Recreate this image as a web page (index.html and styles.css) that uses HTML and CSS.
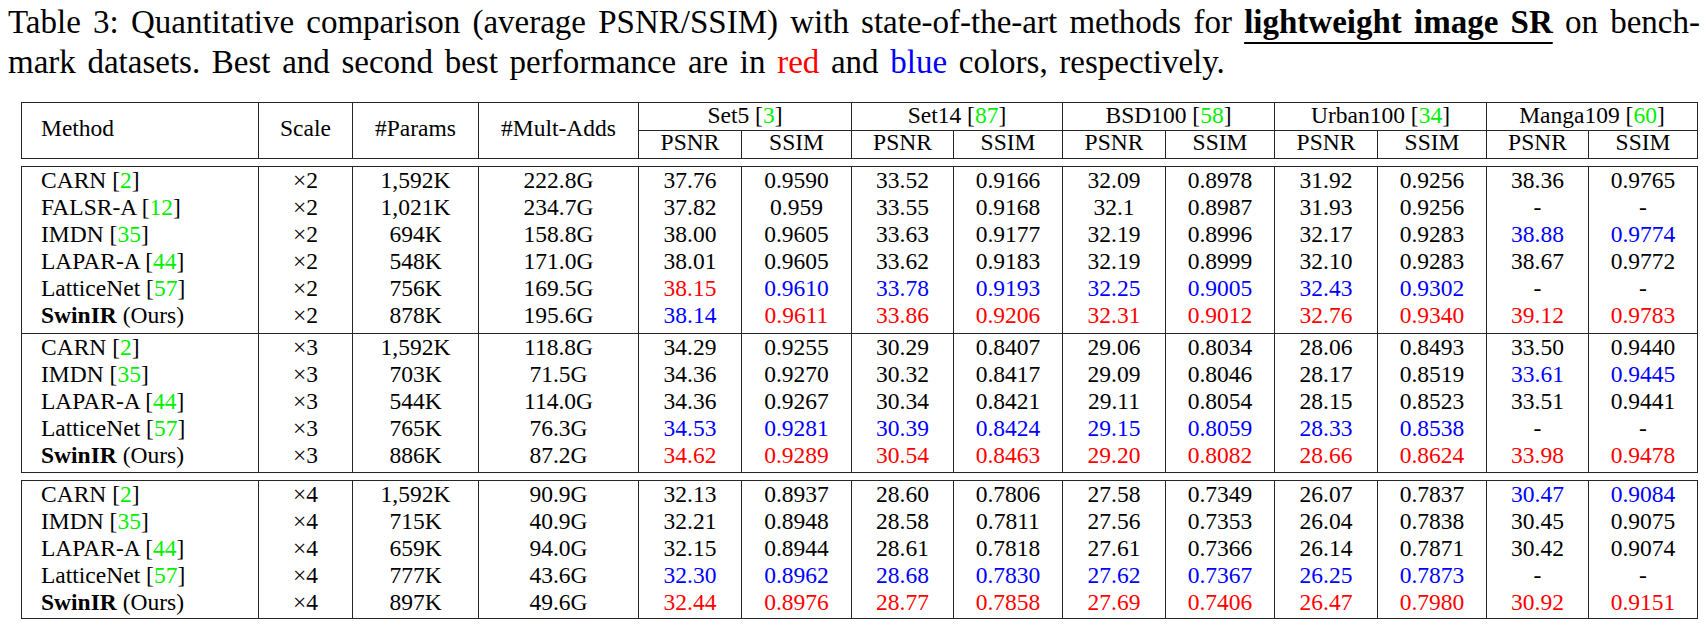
FILE: index.html
```html
<!DOCTYPE html>
<html lang="en">
<head>
<meta charset="utf-8">
<title>Table 3</title>
<link rel="stylesheet" href="styles.css">
</head>
<body>
<div class="page">
  <div class="caption">
    <div class="line1">Table 3: Quantitative comparison (average PSNR/SSIM) with state-of-the-art methods for <span class="ul">lightweight image SR</span> on bench-</div>
    <div class="line2">mark datasets. Best and second best performance are in <span class="r">red</span> and <span class="b">blue</span> colors, respectively.</div>
  </div>

  <div class="grid head">
    <div class="c m span">Method</div>
    <div class="c span">Scale</div>
    <div class="c span">#Params</div>
    <div class="c span">#Mult-Adds</div>
    <div class="c ds">Set5 [<span class="g">3</span>]</div>
    <div class="c ds">Set14 [<span class="g">87</span>]</div>
    <div class="c ds">BSD100 [<span class="g">58</span>]</div>
    <div class="c ds">Urban100 [<span class="g">34</span>]</div>
    <div class="c ds">Manga109 [<span class="g">60</span>]</div>
    <div class="c sub">PSNR</div><div class="c sub">SSIM</div>
    <div class="c sub">PSNR</div><div class="c sub">SSIM</div>
    <div class="c sub">PSNR</div><div class="c sub">SSIM</div>
    <div class="c sub">PSNR</div><div class="c sub">SSIM</div>
    <div class="c sub">PSNR</div><div class="c sub">SSIM</div>
  </div>

  <div class="grid sec s2">
    <div class="c m">CARN [<span class="g">2</span>]</div><div class="c">×2</div><div class="c">1,592K</div><div class="c">222.8G</div>
    <div class="c">37.76</div><div class="c">0.9590</div><div class="c">33.52</div><div class="c">0.9166</div><div class="c">32.09</div><div class="c">0.8978</div><div class="c">31.92</div><div class="c">0.9256</div><div class="c">38.36</div><div class="c">0.9765</div>

    <div class="c m">FALSR-A [<span class="g">12</span>]</div><div class="c">×2</div><div class="c">1,021K</div><div class="c">234.7G</div>
    <div class="c">37.82</div><div class="c">0.959</div><div class="c">33.55</div><div class="c">0.9168</div><div class="c">32.1</div><div class="c">0.8987</div><div class="c">31.93</div><div class="c">0.9256</div><div class="c">-</div><div class="c">-</div>

    <div class="c m">IMDN [<span class="g">35</span>]</div><div class="c">×2</div><div class="c">694K</div><div class="c">158.8G</div>
    <div class="c">38.00</div><div class="c">0.9605</div><div class="c">33.63</div><div class="c">0.9177</div><div class="c">32.19</div><div class="c">0.8996</div><div class="c">32.17</div><div class="c">0.9283</div><div class="c b">38.88</div><div class="c b">0.9774</div>

    <div class="c m">LAPAR-A [<span class="g">44</span>]</div><div class="c">×2</div><div class="c">548K</div><div class="c">171.0G</div>
    <div class="c">38.01</div><div class="c">0.9605</div><div class="c">33.62</div><div class="c">0.9183</div><div class="c">32.19</div><div class="c">0.8999</div><div class="c">32.10</div><div class="c">0.9283</div><div class="c">38.67</div><div class="c">0.9772</div>

    <div class="c m">LatticeNet [<span class="g">57</span>]</div><div class="c">×2</div><div class="c">756K</div><div class="c">169.5G</div>
    <div class="c r">38.15</div><div class="c b">0.9610</div><div class="c b">33.78</div><div class="c b">0.9193</div><div class="c b">32.25</div><div class="c b">0.9005</div><div class="c b">32.43</div><div class="c b">0.9302</div><div class="c">-</div><div class="c">-</div>

    <div class="c m"><strong>SwinIR</strong> (Ours)</div><div class="c">×2</div><div class="c">878K</div><div class="c">195.6G</div>
    <div class="c b">38.14</div><div class="c r">0.9611</div><div class="c r">33.86</div><div class="c r">0.9206</div><div class="c r">32.31</div><div class="c r">0.9012</div><div class="c r">32.76</div><div class="c r">0.9340</div><div class="c r">39.12</div><div class="c r">0.9783</div>
  </div>

  <div class="grid sec s3">
    <div class="c m">CARN [<span class="g">2</span>]</div><div class="c">×3</div><div class="c">1,592K</div><div class="c">118.8G</div>
    <div class="c">34.29</div><div class="c">0.9255</div><div class="c">30.29</div><div class="c">0.8407</div><div class="c">29.06</div><div class="c">0.8034</div><div class="c">28.06</div><div class="c">0.8493</div><div class="c">33.50</div><div class="c">0.9440</div>

    <div class="c m">IMDN [<span class="g">35</span>]</div><div class="c">×3</div><div class="c">703K</div><div class="c">71.5G</div>
    <div class="c">34.36</div><div class="c">0.9270</div><div class="c">30.32</div><div class="c">0.8417</div><div class="c">29.09</div><div class="c">0.8046</div><div class="c">28.17</div><div class="c">0.8519</div><div class="c b">33.61</div><div class="c b">0.9445</div>

    <div class="c m">LAPAR-A [<span class="g">44</span>]</div><div class="c">×3</div><div class="c">544K</div><div class="c">114.0G</div>
    <div class="c">34.36</div><div class="c">0.9267</div><div class="c">30.34</div><div class="c">0.8421</div><div class="c">29.11</div><div class="c">0.8054</div><div class="c">28.15</div><div class="c">0.8523</div><div class="c">33.51</div><div class="c">0.9441</div>

    <div class="c m">LatticeNet [<span class="g">57</span>]</div><div class="c">×3</div><div class="c">765K</div><div class="c">76.3G</div>
    <div class="c b">34.53</div><div class="c b">0.9281</div><div class="c b">30.39</div><div class="c b">0.8424</div><div class="c b">29.15</div><div class="c b">0.8059</div><div class="c b">28.33</div><div class="c b">0.8538</div><div class="c">-</div><div class="c">-</div>

    <div class="c m"><strong>SwinIR</strong> (Ours)</div><div class="c">×3</div><div class="c">886K</div><div class="c">87.2G</div>
    <div class="c r">34.62</div><div class="c r">0.9289</div><div class="c r">30.54</div><div class="c r">0.8463</div><div class="c r">29.20</div><div class="c r">0.8082</div><div class="c r">28.66</div><div class="c r">0.8624</div><div class="c r">33.98</div><div class="c r">0.9478</div>
  </div>

  <div class="grid sec s4">
    <div class="c m">CARN [<span class="g">2</span>]</div><div class="c">×4</div><div class="c">1,592K</div><div class="c">90.9G</div>
    <div class="c">32.13</div><div class="c">0.8937</div><div class="c">28.60</div><div class="c">0.7806</div><div class="c">27.58</div><div class="c">0.7349</div><div class="c">26.07</div><div class="c">0.7837</div><div class="c b">30.47</div><div class="c b">0.9084</div>

    <div class="c m">IMDN [<span class="g">35</span>]</div><div class="c">×4</div><div class="c">715K</div><div class="c">40.9G</div>
    <div class="c">32.21</div><div class="c">0.8948</div><div class="c">28.58</div><div class="c">0.7811</div><div class="c">27.56</div><div class="c">0.7353</div><div class="c">26.04</div><div class="c">0.7838</div><div class="c">30.45</div><div class="c">0.9075</div>

    <div class="c m">LAPAR-A [<span class="g">44</span>]</div><div class="c">×4</div><div class="c">659K</div><div class="c">94.0G</div>
    <div class="c">32.15</div><div class="c">0.8944</div><div class="c">28.61</div><div class="c">0.7818</div><div class="c">27.61</div><div class="c">0.7366</div><div class="c">26.14</div><div class="c">0.7871</div><div class="c">30.42</div><div class="c">0.9074</div>

    <div class="c m">LatticeNet [<span class="g">57</span>]</div><div class="c">×4</div><div class="c">777K</div><div class="c">43.6G</div>
    <div class="c b">32.30</div><div class="c b">0.8962</div><div class="c b">28.68</div><div class="c b">0.7830</div><div class="c b">27.62</div><div class="c b">0.7367</div><div class="c b">26.25</div><div class="c b">0.7873</div><div class="c">-</div><div class="c">-</div>

    <div class="c m"><strong>SwinIR</strong> (Ours)</div><div class="c">×4</div><div class="c">897K</div><div class="c">49.6G</div>
    <div class="c r">32.44</div><div class="c r">0.8976</div><div class="c r">28.77</div><div class="c r">0.7858</div><div class="c r">27.69</div><div class="c r">0.7406</div><div class="c r">26.47</div><div class="c r">0.7980</div><div class="c r">30.92</div><div class="c r">0.9151</div>
  </div>
</div>
</body>
</html>
```

FILE: styles.css
```css
html, body {
  margin: 0;
  padding: 0;
  background: #ffffff;
}

.page {
  width: 1708px;
  font-family: "Liberation Serif", "Times New Roman", serif;
  color: #000000;
}

.caption {
  margin-left: 8px;
  width: 1692px;
  padding-top: 2px;
  font-size: 33px;
  line-height: 40px;
}

.line1 {
  text-align: justify;
  text-align-last: justify;
}

.line2 {
  text-align: left;
  word-spacing: 3.4px;
}

.ul {
  font-weight: bold;
  text-decoration: underline;
  text-decoration-thickness: 2px;
  text-underline-offset: 9px;
  text-decoration-skip-ink: none;
}

.r { color: #ff0000; }
.b { color: #0000ff; }
.g { color: #00f000; }

.grid {
  display: grid;
  grid-template-columns: 236px 94px 126px 160px 103px 110px 102px 109px 103px 109px 103px 109px 102px 109px;
  width: max-content;
  margin-left: 21px;
  border: 1px solid #262626;
  font-size: 23.5px;
}

.c {
  border-left: 1px solid #262626;
  text-align: center;
  line-height: 27px;
  white-space: nowrap;
}

.c.m {
  border-left: 0;
  text-align: left;
  padding-left: 19px;
}

.c strong {
  font-weight: bold;
}

/* header */
.head {
  margin-top: 20px;
  grid-template-rows: 28px 27px;
}

.head .span {
  grid-row: span 2;
  display: flex;
  align-items: center;
  justify-content: center;
  padding-bottom: 5px;
}

.head .span.m {
  justify-content: flex-start;
}

.head .ds {
  grid-column: span 2;
  border-bottom: 1px solid #262626;
  line-height: 25px;
}

.head .sub {
  line-height: 23px;
}

/* body sections */
.s2 {
  margin-top: 7px;
  grid-template-rows: repeat(5, 27px) 31px;
}

.s3 {
  border-top: 0;
  grid-template-rows: repeat(4, 27px) 30px;
}

.s4 {
  margin-top: 7px;
  grid-template-rows: repeat(4, 27px) 29px;
}
```
